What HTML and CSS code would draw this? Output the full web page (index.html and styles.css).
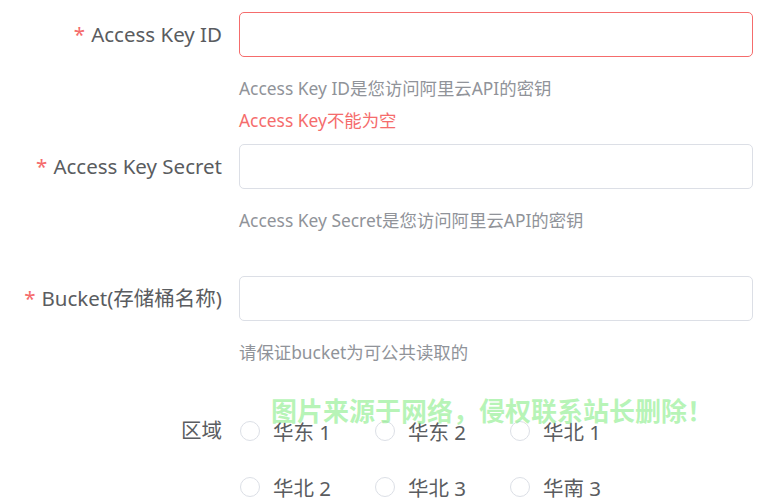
FILE: index.html
```html
<!DOCTYPE html>
<html lang="zh-CN">
<head>
  <meta charset="UTF-8">
  <meta name="viewport" content="width=device-width, initial-scale=1.0">
  <title>OSS 配置</title>
  <link rel="stylesheet" href="styles.css">
</head>
<body>
  <form class="form">
    <!-- Access Key ID -->
    <div class="form-item">
      <label class="form-label is-required">Access Key ID</label>
      <div class="form-content">
        <input class="input is-error" type="text">
        <div class="help">Access Key ID是您访问阿里云API的密钥</div>
        <div class="error">Access Key不能为空</div>
      </div>
    </div>

    <!-- Access Key Secret -->
    <div class="form-item">
      <label class="form-label is-required">Access Key Secret</label>
      <div class="form-content">
        <input class="input" type="text">
        <div class="help">Access Key Secret是您访问阿里云API的密钥</div>
        <div class="error"></div>
      </div>
    </div>

    <!-- Bucket -->
    <div class="form-item">
      <label class="form-label is-required">Bucket(存储桶名称)</label>
      <div class="form-content">
        <input class="input" type="text">
        <div class="help">请保证bucket为可公共读取的</div>
        <div class="error"></div>
      </div>
    </div>

    <!-- 区域 -->
    <div class="form-item">
      <label class="form-label">区域</label>
      <div class="radio-group">
        <label class="radio"><span class="radio-dot"></span>华东 1</label>
        <label class="radio"><span class="radio-dot"></span>华东 2</label>
        <label class="radio"><span class="radio-dot"></span>华北 1</label>
        <label class="radio"><span class="radio-dot"></span>华北 2</label>
        <label class="radio"><span class="radio-dot"></span>华北 3</label>
        <label class="radio"><span class="radio-dot"></span>华南 3</label>
      </div>
    </div>
  </form>

  <div class="watermark">图片来源于网络，侵权联系站长删除！</div>
</body>
</html>
```

FILE: styles.css
```css
body {
  margin: 0;
  font-family: "Noto Sans", "Noto Sans CJK SC", sans-serif;
  color: #5a5c60;
  background: #fff;
  overflow: hidden;
}

.form {
  padding: 12px 13px 0 0;
}

.form-item {
  display: grid;
  grid-template-columns: 222px 1fr;
  column-gap: 17px;
  margin-bottom: 8px;
}

.form-label {
  height: 45px;
  line-height: 45px;
  text-align: right;
  font-size: 20.5px;
  white-space: nowrap;
}

.form-label.is-required::before {
  content: "*";
  color: #f56c6c;
  margin-right: 6px;
}

.input {
  display: block;
  box-sizing: border-box;
  width: 100%;
  height: 45px;
  border: 1px solid #dcdfe6;
  border-radius: 5px;
  outline: none;
  font: inherit;
}

.input.is-error {
  border-color: #f56c6c;
}

.help,
.error {
  height: 32px;
  line-height: 32px;
  font-size: 17.4px;
  white-space: nowrap;
}

.help {
  margin-top: 15px;
  color: #909399;
}

.error {
  color: #f56c6c;
}

.radio-group {
  display: grid;
  grid-template-columns: repeat(3, 135px);
  row-gap: 10px;
}

.radio {
  display: flex;
  align-items: center;
  height: 46px;
  font-size: 20.5px;
  color: #5a5c60;
}

.radio-dot {
  box-sizing: border-box;
  width: 20px;
  height: 20px;
  margin-left: 1px;
  margin-right: 13px;
  border: 1px solid #dcdfe6;
  border-radius: 50%;
}

.watermark {
  position: absolute;
  top: 391px;
  left: 271px;
  font-family: "Noto Sans CJK SC", sans-serif;
  font-size: 26px;
  font-weight: 700;
  color: rgba(120, 235, 120, 0.55);
  white-space: nowrap;
}
```
